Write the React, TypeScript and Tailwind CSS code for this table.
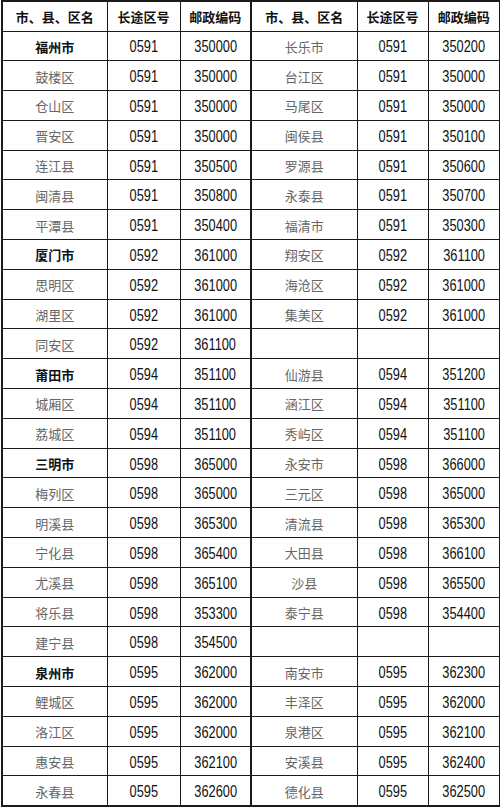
import React from 'react';

type Cell = { name: string; code: string; zip: string; city?: boolean } | null;

const rows: [Cell, Cell][] = [
  [{ name: '福州市', code: '0591', zip: '350000', city: true }, { name: '长乐市', code: '0591', zip: '350200' }],
  [{ name: '鼓楼区', code: '0591', zip: '350000' }, { name: '台江区', code: '0591', zip: '350000' }],
  [{ name: '仓山区', code: '0591', zip: '350000' }, { name: '马尾区', code: '0591', zip: '350000' }],
  [{ name: '晋安区', code: '0591', zip: '350000' }, { name: '闽侯县', code: '0591', zip: '350100' }],
  [{ name: '连江县', code: '0591', zip: '350500' }, { name: '罗源县', code: '0591', zip: '350600' }],
  [{ name: '闽清县', code: '0591', zip: '350800' }, { name: '永泰县', code: '0591', zip: '350700' }],
  [{ name: '平潭县', code: '0591', zip: '350400' }, { name: '福清市', code: '0591', zip: '350300' }],
  [{ name: '厦门市', code: '0592', zip: '361000', city: true }, { name: '翔安区', code: '0592', zip: '361100' }],
  [{ name: '思明区', code: '0592', zip: '361000' }, { name: '海沧区', code: '0592', zip: '361000' }],
  [{ name: '湖里区', code: '0592', zip: '361000' }, { name: '集美区', code: '0592', zip: '361000' }],
  [{ name: '同安区', code: '0592', zip: '361100' }, null],
  [{ name: '莆田市', code: '0594', zip: '351100', city: true }, { name: '仙游县', code: '0594', zip: '351200' }],
  [{ name: '城厢区', code: '0594', zip: '351100' }, { name: '涵江区', code: '0594', zip: '351100' }],
  [{ name: '荔城区', code: '0594', zip: '351100' }, { name: '秀屿区', code: '0594', zip: '351100' }],
  [{ name: '三明市', code: '0598', zip: '365000', city: true }, { name: '永安市', code: '0598', zip: '366000' }],
  [{ name: '梅列区', code: '0598', zip: '365000' }, { name: '三元区', code: '0598', zip: '365000' }],
  [{ name: '明溪县', code: '0598', zip: '365300' }, { name: '清流县', code: '0598', zip: '365300' }],
  [{ name: '宁化县', code: '0598', zip: '365400' }, { name: '大田县', code: '0598', zip: '366100' }],
  [{ name: '尤溪县', code: '0598', zip: '365100' }, { name: '沙县', code: '0598', zip: '365500' }],
  [{ name: '将乐县', code: '0598', zip: '353300' }, { name: '泰宁县', code: '0598', zip: '354400' }],
  [{ name: '建宁县', code: '0598', zip: '354500' }, null],
  [{ name: '泉州市', code: '0595', zip: '362000', city: true }, { name: '南安市', code: '0595', zip: '362300' }],
  [{ name: '鲤城区', code: '0595', zip: '362000' }, { name: '丰泽区', code: '0595', zip: '362000' }],
  [{ name: '洛江区', code: '0595', zip: '362000' }, { name: '泉港区', code: '0595', zip: '362100' }],
  [{ name: '惠安县', code: '0595', zip: '362100' }, { name: '安溪县', code: '0595', zip: '362400' }],
  [{ name: '永春县', code: '0595', zip: '362600' }, { name: '德化县', code: '0595', zip: '362500' }],
];

const cjk = "font-['Noto_Sans_CJK_SC',sans-serif]";
const td = 'border border-[#1a1a1a] text-center p-0 align-middle';

const Num = ({ v }: { v: string }) => (
  <span className="inline-block scale-x-[0.8] font-['Liberation_Sans',Arial,sans-serif] text-[16px] text-[#111] pt-[3px]">
    {v}
  </span>
);

const Half = ({ c, mid }: { c: Cell; mid?: boolean }) => (
  <>
    <td className={`${td} ${mid ? 'border-l-2' : ''}`}>
      {c && (
        <span
          className={`${cjk} text-[13px] ${c.city ? 'font-bold text-[#111]' : 'text-[#666]'}`}
        >
          {c.name}
        </span>
      )}
    </td>
    <td className={td}>{c && <Num v={c.code} />}</td>
    <td className={td}>{c && <Num v={c.zip} />}</td>
  </>
);

const Head = ({ mid }: { mid?: boolean }) => (
  <>
    <th className={`${td} ${mid ? 'border-l-2' : ''} ${cjk} text-[13px] font-bold text-[#111]`}>市、县、区名</th>
    <th className={`${td} ${cjk} text-[13px] font-bold text-[#111]`}>长途区号</th>
    <th className={`${td} ${cjk} text-[13px] font-bold text-[#111]`}>邮政编码</th>
  </>
);

export default function App() {
  return (
    <div className="w-[500px] h-[808px] bg-white pl-[1px]">
      <table className="table-fixed border-collapse w-[498px] border-2 border-[#1a1a1a]">
        <colgroup>
          <col className="w-[105px]" />
          <col className="w-[73px]" />
          <col className="w-[71px]" />
          <col className="w-[106px]" />
          <col className="w-[71px]" />
          <col className="w-[72px]" />
        </colgroup>
        <tbody>
          <tr className="h-[30px]">
            <Head />
            <Head mid />
          </tr>
          {rows.map(([l, r], i) => (
            <tr key={i} className="h-[29.8px]">
              <Half c={l} />
              <Half c={r} mid />
            </tr>
          ))}
        </tbody>
      </table>
    </div>
  );
}
